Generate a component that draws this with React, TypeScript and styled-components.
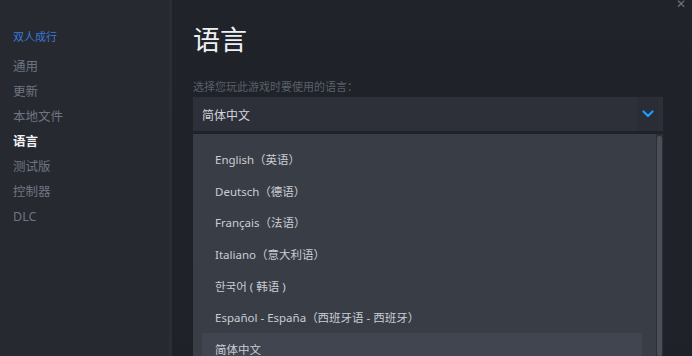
import React from "react";
import styled, { createGlobalStyle } from "styled-components";

const Global = createGlobalStyle`
  html, body { margin: 0; padding: 0; background: #1f2228; }
  body { font-family: "Noto Sans", "Noto Sans CJK SC", sans-serif; }
  #root { width: 692px; height: 356px; overflow: hidden; }
`;

const Frame = styled.div`
  display: flex;
  width: 692px;
  height: 356px;
  overflow: hidden;
  position: relative;
`;

const Sidebar = styled.nav`
  width: 172px;
  flex: none;
  background: #262930;
  border-right: 3px solid #2a2d34;
  padding: 28px 0 0 13px;
  box-sizing: border-box;
  display: flex;
  flex-direction: column;
`;

const GameTitle = styled.div`
  color: #3a78d6;
  font-size: 11px;
  line-height: 16px;
  margin-bottom: 10px;
  font-family: "Noto Sans CJK SC", sans-serif;
`;

const NavItem = styled.div<{ $active?: boolean }>`
  color: ${(p) => (p.$active ? "#f2f4f7" : "#6f7580")};
  font-weight: ${(p) => (p.$active ? 700 : 400)};
  font-size: 12.5px;
  line-height: 25px;
  font-family: "Noto Sans", "Noto Sans CJK SC", sans-serif;
`;

const Main = styled.main`
  flex: 1;
  background: linear-gradient(180deg, #20232a 0%, #1e2127 100%);
  padding: 19px 29px 0 21px;
  display: flex;
  flex-direction: column;
  min-width: 0;
`;

const Title = styled.h1`
  margin: 0;
  color: #eef0f3;
  font-weight: 400;
  font-size: 27px;
  line-height: 40px;
  font-family: "Noto Sans CJK SC", sans-serif;
`;

const Label = styled.div`
  margin-top: 19px;
  color: #59606a;
  font-size: 11px;
  line-height: 16px;
  font-family: "Noto Sans CJK SC", sans-serif;
`;

const Select = styled.div`
  margin-top: 3px;
  height: 34px;
  background: #2d3038;
  display: flex;
  align-items: center;
  justify-content: space-between;
  padding-left: 9px;
  box-sizing: border-box;
`;

const SelectText = styled.span`
  color: #d2d6dc;
  font-size: 12px;
  font-family: "Noto Sans CJK SC", sans-serif;
`;

const ChevronBox = styled.div`
  width: 22px;
  height: 34px;
  display: flex;
  align-items: center;
  justify-content: center;
  background: #2a2d35;
  margin-right: 4px;
`;

const ListWrap = styled.div`
  margin-top: 3px;
  display: flex;
  flex: 1;
  min-height: 0;
`;

const List = styled.div`
  flex: 1;
  background: #393d46;
  padding: 9px 14px 0 9px;
  display: flex;
  flex-direction: column;
`;

const Option = styled.div<{ $selected?: boolean }>`
  height: 31.7px;
  display: flex;
  align-items: center;
  padding-left: 13px;
  color: #c9cdd4;
  font-size: 11.5px;
  font-family: "Noto Sans", "Noto Sans CJK SC", "Noto Sans CJK KR", sans-serif;
  background: ${(p) => (p.$selected ? "#41454f" : "transparent")};
  flex: none;
`;

const ScrollTrack = styled.div`
  width: 7px;
  background: #2c2f37;
  display: flex;
  padding: 2px 1px 0;
  box-sizing: border-box;
`;

const ScrollThumb = styled.div`
  flex: 1;
  background: #4a4e57;
  border-radius: 2px;
`;

const Close = styled.div`
  position: absolute;
  right: 6px;
  top: -2px;
  color: #6e737c;
  font-size: 12px;
  line-height: 12px;
  font-family: "DejaVu Sans", sans-serif;
`;

const navItems = ["通用", "更新", "本地文件", "语言", "测试版", "控制器", "DLC"];
const options = [
  "English（英语）",
  "Deutsch（德语）",
  "Français（法语）",
  "Italiano（意大利语）",
  "한국어 ( 韩语 )",
  "Español - España（西班牙语 - 西班牙）",
  "简体中文",
];

export default function App() {
  return (
    <>
      <Global />
      <Frame>
        <Sidebar>
          <GameTitle>双人成行</GameTitle>
          {navItems.map((n) => (
            <NavItem key={n} $active={n === "语言"}>
              {n}
            </NavItem>
          ))}
        </Sidebar>
        <Main>
          <Title>语言</Title>
          <Label>选择您玩此游戏时要使用的语言：</Label>
          <Select>
            <SelectText>简体中文</SelectText>
            <ChevronBox>
              <svg width="12" height="8" viewBox="0 0 12 8">
                <path d="M1.5 1.5 L6 6 L10.5 1.5" fill="none" stroke="#1a9fff" strokeWidth="2.2" strokeLinecap="round" strokeLinejoin="round" />
              </svg>
            </ChevronBox>
          </Select>
          <ListWrap>
            <List>
              {options.map((o) => (
                <Option key={o} $selected={o === "简体中文"}>
                  {o}
                </Option>
              ))}
            </List>
            <ScrollTrack>
              <ScrollThumb />
            </ScrollTrack>
          </ListWrap>
        </Main>
        <Close>✕</Close>
      </Frame>
    </>
  );
}
